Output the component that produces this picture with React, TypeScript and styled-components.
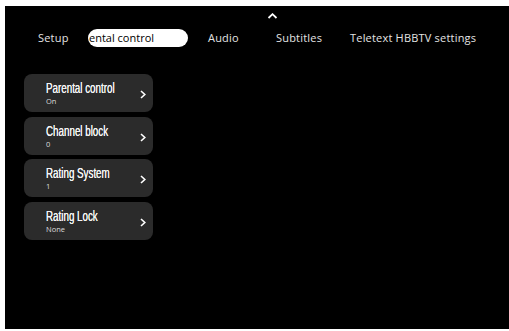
import React from "react";
import styled, { createGlobalStyle } from "styled-components";

const Global = createGlobalStyle`
  html, body { margin: 0; padding: 0; background: #ffffff; }
  body { font-family: "Open Sans", "Liberation Sans", sans-serif; }
`;

const Screen = styled.div`
  margin: 6px 0 0 5px;
  width: 504px;
  height: 323px;
  background: #000;
  display: flex;
  flex-direction: column;
  overflow: hidden;
`;

const CaretRow = styled.div`
  display: flex;
  padding: 7px 0 0 262px;
  height: 6px;
`;

const Tabs = styled.div`
  display: flex;
  align-items: center;
  height: 18px;
  margin-top: 10px;
  padding-left: 33px;
`;

const Tab = styled.div<{ $w?: number }>`
  flex: 0 0 ${(p) => (p.$w ? `${p.$w}px` : "auto")};
  color: #e4e4e4;
  font-size: 11px;
  letter-spacing: 0.2px;
  line-height: 18px;
  white-space: nowrap;
`;

const ActiveTab = styled.div`
  flex: 0 0 100px;
  height: 18px;
  margin-right: 20px;
  border-radius: 9px;
  background: #fff;
  color: #000;
  font-size: 11px;
  line-height: 18px;
  padding-left: 1px;
  box-sizing: border-box;
  white-space: nowrap;
  overflow: hidden;
`;

const List = styled.div`
  display: flex;
  flex-direction: column;
  gap: 4.5px;
  margin-top: 27px;
  padding-left: 19px;
`;

const Card = styled.div`
  width: 129px;
  height: 38px;
  box-sizing: border-box;
  border-radius: 8px;
  background: #2b2b2b;
  display: flex;
  align-items: flex-start;
  justify-content: space-between;
  padding: 7px 7px 0 22px;
`;

const Texts = styled.div`
  flex: 1 1 auto;
  min-width: 0;
  display: flex;
  flex-direction: column;
`;

const Title = styled.div`
  font-family: "Liberation Sans", Arial, sans-serif;
  font-size: 14px;
  line-height: 15px;
  color: #f4f4f4;
  white-space: nowrap;
  transform: scaleX(0.7);
  transform-origin: left center;
  text-shadow: 0 0 0.4px #fff;
`;

const Sub = styled.div`
  font-family: "Open Sans", "Liberation Sans", sans-serif;
  font-size: 7.5px;
  line-height: 10px;
  color: #dcdcdc;
`;

const Chevron = styled.svg`
  flex: 0 0 6px;
  margin-top: 9px;
`;

const items = [
  { t: "Parental control", s: "On" },
  { t: "Channel block", s: "0" },
  { t: "Rating System", s: "1" },
  { t: "Rating Lock", s: "None" },
];

export default function App() {
  return (
    <>
      <Global />
      <Screen>
        <CaretRow>
          <svg width="11" height="6" viewBox="0 0 11 6">
            <path d="M1.5 5 L5.5 1.2 L9.5 5" stroke="#fff" strokeWidth="1.8" fill="none" />
          </svg>
        </CaretRow>
        <Tabs>
          <Tab $w={50}>Setup</Tab>
          <ActiveTab>ental control</ActiveTab>
          <Tab $w={68}>Audio</Tab>
          <Tab $w={74}>Subtitles</Tab>
          <Tab>Teletext HBBTV settings</Tab>
        </Tabs>
        <List>
          {items.map((it) => (
            <Card key={it.t}>
              <Texts>
                <Title>{it.t}</Title>
                <Sub>{it.s}</Sub>
              </Texts>
              <Chevron width="6" height="9" viewBox="0 0 6 9">
                <path d="M1 1 L4.8 4.5 L1 8" stroke="#fff" strokeWidth="1.6" fill="none" />
              </Chevron>
            </Card>
          ))}
        </List>
      </Screen>
    </>
  );
}
